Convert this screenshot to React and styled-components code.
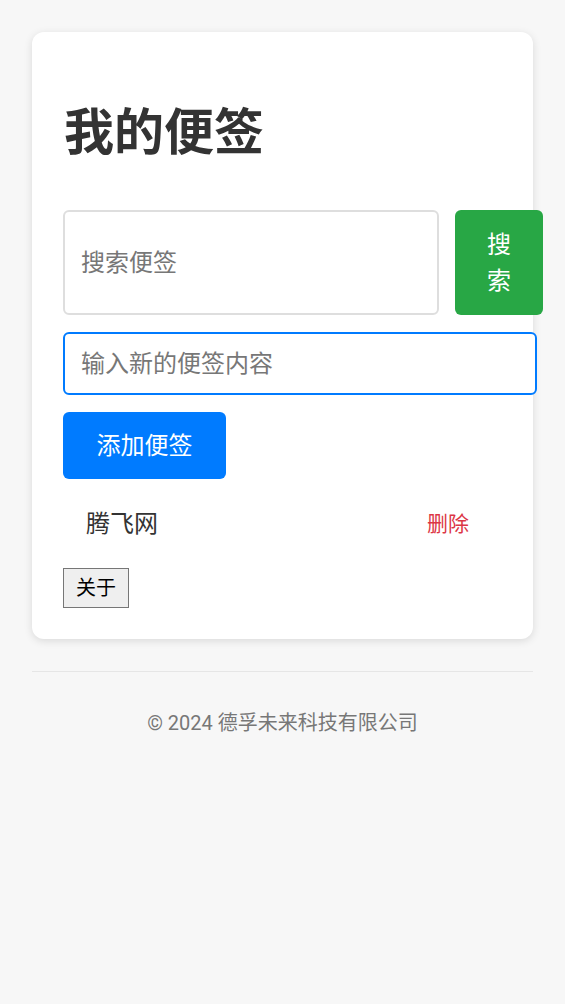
import React, { useState } from "react";
import styled, { createGlobalStyle } from "styled-components";

const GlobalStyle = createGlobalStyle`
  body {
    margin: 0;
    background: #f7f7f7;
    font-family: Roboto, "Noto Sans CJK SC", sans-serif;
    color: #333;
  }
  * {
    box-sizing: border-box;
  }
`;

const Page = styled.div`
  padding: 32px 32px 0;
`;

const Card = styled.div`
  max-width: 501px;
  margin: 0 auto;
  background: #fff;
  border-radius: 12px;
  box-shadow: 0 2px 8px rgba(0, 0, 0, 0.12);
  padding: 32px 32px 31px;
`;

const Title = styled.h1`
  margin: 34px 0 42px;
  font-size: 50px;
  line-height: 70px;
  font-weight: 700;
  color: #333;
`;

const SearchRow = styled.div`
  display: flex;
  gap: 16px;
  width: 480px;
  margin-left: -1px;
`;

const Input = styled.input`
  display: block;
  font: inherit;
  font-size: 24px;
  padding: 16px;
  border: 2px solid ${(p) => (p.$focused ? "#007bff" : "#dedede")};
  border-radius: 6px;
  outline: none;
  color: #333;
  background: #fff;
  &::placeholder {
    color: #777;
  }
`;

const SearchInput = styled(Input)`
  width: 376px;
  flex: 0 0 376px;
`;

const NoteInput = styled(Input)`
  width: 474px;
  height: 63px;
  padding: 12px 16px;
  margin: 17px 0 0 -1px;
`;

const ActionButton = styled.button`
  font: inherit;
  font-size: 24px;
  line-height: 36px;
  color: #fff;
  background: ${(p) => p.$bg};
  border: none;
  border-radius: 6px;
  cursor: pointer;
`;

const SearchButton = styled(ActionButton)`
  width: 88px;
  padding: 17px 32px 16px;
`;

const AddButton = styled(ActionButton)`
  display: block;
  margin: 17px 0 0 -1px;
  width: 163px;
  height: 67px;
  padding: 0 32px;
`;

const NoteList = styled.ul`
  list-style: none;
  margin: 13px 0 12px;
  padding: 0;
`;

const NoteItem = styled.li`
  display: flex;
  align-items: center;
  justify-content: space-between;
  padding: 10px 24px 10px 22px;
  font-size: 24px;
  line-height: 36px;
  color: #333;
`;

const DeleteButton = styled.button`
  font: inherit;
  font-size: 21px;
  color: #dc3545;
  background: none;
  border: none;
  padding: 4px 8px;
  cursor: pointer;
`;

const AboutButton = styled.button`
  display: block;
  font-family: Roboto, "Noto Sans CJK SC", sans-serif;
  font-size: 20px;
  line-height: 28px;
  padding: 5px 12px;
  margin-left: -1px;
  color: #000;
  background: #efefef;
  border: 1.5px solid #767676;
  border-radius: 0;
`;

const Divider = styled.hr`
  max-width: 501px;
  margin: 32px auto 0;
  border: none;
  border-top: 1px solid #e6e6e6;
`;

const Footer = styled.footer`
  text-align: center;
  font-size: 20px;
  line-height: 30px;
  color: #777;
  padding-top: 36px;
`;

export default function App() {
  const [notes, setNotes] = useState(["腾飞网"]);
  const [draft, setDraft] = useState("");
  const [query, setQuery] = useState("");

  const add = () => {
    if (!draft.trim()) return;
    setNotes([...notes, draft.trim()]);
    setDraft("");
  };

  const shown = notes.filter((n) => n.includes(query));

  return (
    <Page>
      <GlobalStyle />
      <Card>
        <Title>我的便签</Title>
        <SearchRow>
          <SearchInput
            placeholder="搜索便签"
            value={query}
            onChange={(e) => setQuery(e.target.value)}
          />
          <SearchButton $bg="#28a745">搜索</SearchButton>
        </SearchRow>
        <NoteInput
          $focused
          placeholder="输入新的便签内容"
          value={draft}
          onChange={(e) => setDraft(e.target.value)}
        />
        <AddButton $bg="#007bff" onClick={add}>
          添加便签
        </AddButton>
        <NoteList>
          {shown.map((n, i) => (
            <NoteItem key={i}>
              <span>{n}</span>
              <DeleteButton onClick={() => setNotes(notes.filter((x) => x !== n))}>
                删除
              </DeleteButton>
            </NoteItem>
          ))}
        </NoteList>
        <AboutButton>关于</AboutButton>
      </Card>
      <Divider />
      <Footer>© 2024 德孚未来科技有限公司</Footer>
    </Page>
  );
}
